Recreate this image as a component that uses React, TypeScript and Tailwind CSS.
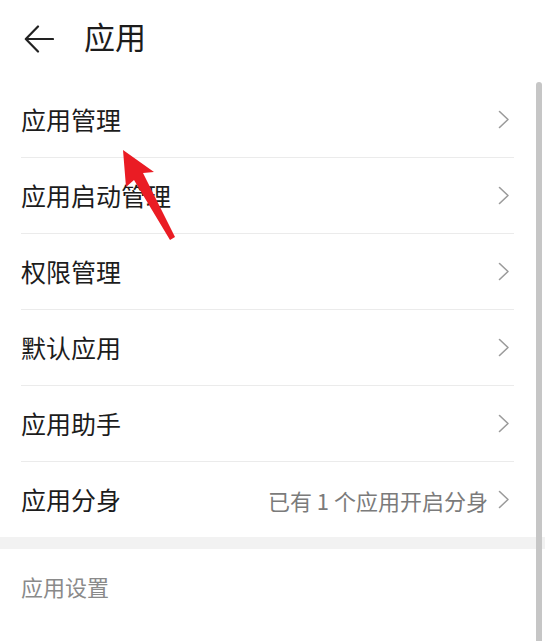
const items = [
  { label: "应用管理" },
  { label: "应用启动管理" },
  { label: "权限管理" },
  { label: "默认应用" },
  { label: "应用助手" },
  { label: "应用分身", hint: "已有 1 个应用开启分身" },
]

function Chevron() {
  return (
    <svg width="12" height="19" viewBox="0 0 12 19" fill="none" className="shrink-0">
      <path d="M1.5 1.5 L10 9.5 L1.5 17.5" stroke="#9b9b9b" strokeWidth="1.6" strokeLinecap="round" strokeLinejoin="round" />
    </svg>
  )
}

export default function App() {
  return (
    <div
      className="relative w-[545px] h-[641px] overflow-hidden bg-white text-[#1c1c1c]"
      style={{ fontFamily: '"Noto Sans CJK SC", "Noto Sans", sans-serif' }}
    >
      <header className="h-[82px] pb-[5px] flex items-center">
        <svg width="30" height="30" viewBox="0 0 30 30" fill="none" className="ml-[24px]">
          <path d="M2 15 H29 M14 2.5 L1.8 15 L14 27.5" stroke="#222" strokeWidth="2.2" strokeLinecap="round" strokeLinejoin="round" />
        </svg>
        <h1 className="ml-[30px] mb-[7px] text-[31px] leading-none font-normal">应用</h1>
      </header>

      <ul className="pl-[21px] pr-[31px]">
        {items.map((it, i) => (
          <li
            key={it.label}
            className={`flex items-center justify-between pr-[4px] ${i === items.length - 1 ? "h-[75px]" : "h-[76px] border-b border-[#ebebeb]"}`}
          >
            <span className="text-[25px] leading-none">{it.label}</span>
            <div className="flex items-center gap-[10px]">
              {it.hint && <span className="text-[22px] leading-none text-[#7b7b7b]">{it.hint}</span>}
              <Chevron />
            </div>
          </li>
        ))}
      </ul>

      <div className="h-[12px] bg-[#f2f2f2]" />

      <div className="pl-[21px] pt-[26px] text-[22px] leading-none text-[#8a8a8a]">应用设置</div>

      {/* scrollbar */}
      <div className="absolute right-[3px] top-[82px] bottom-0 w-[6px] rounded-t-full bg-[#c6c6c6]" />

      {/* red annotation arrow */}
      <svg className="absolute left-0 top-0 pointer-events-none" width="545" height="641">
        <polygon
          points="123,150 154,172 143,173 175,237 170,240 134,180 126,187"
          fill="#ea1c24"
        />
      </svg>
    </div>
  )
}
